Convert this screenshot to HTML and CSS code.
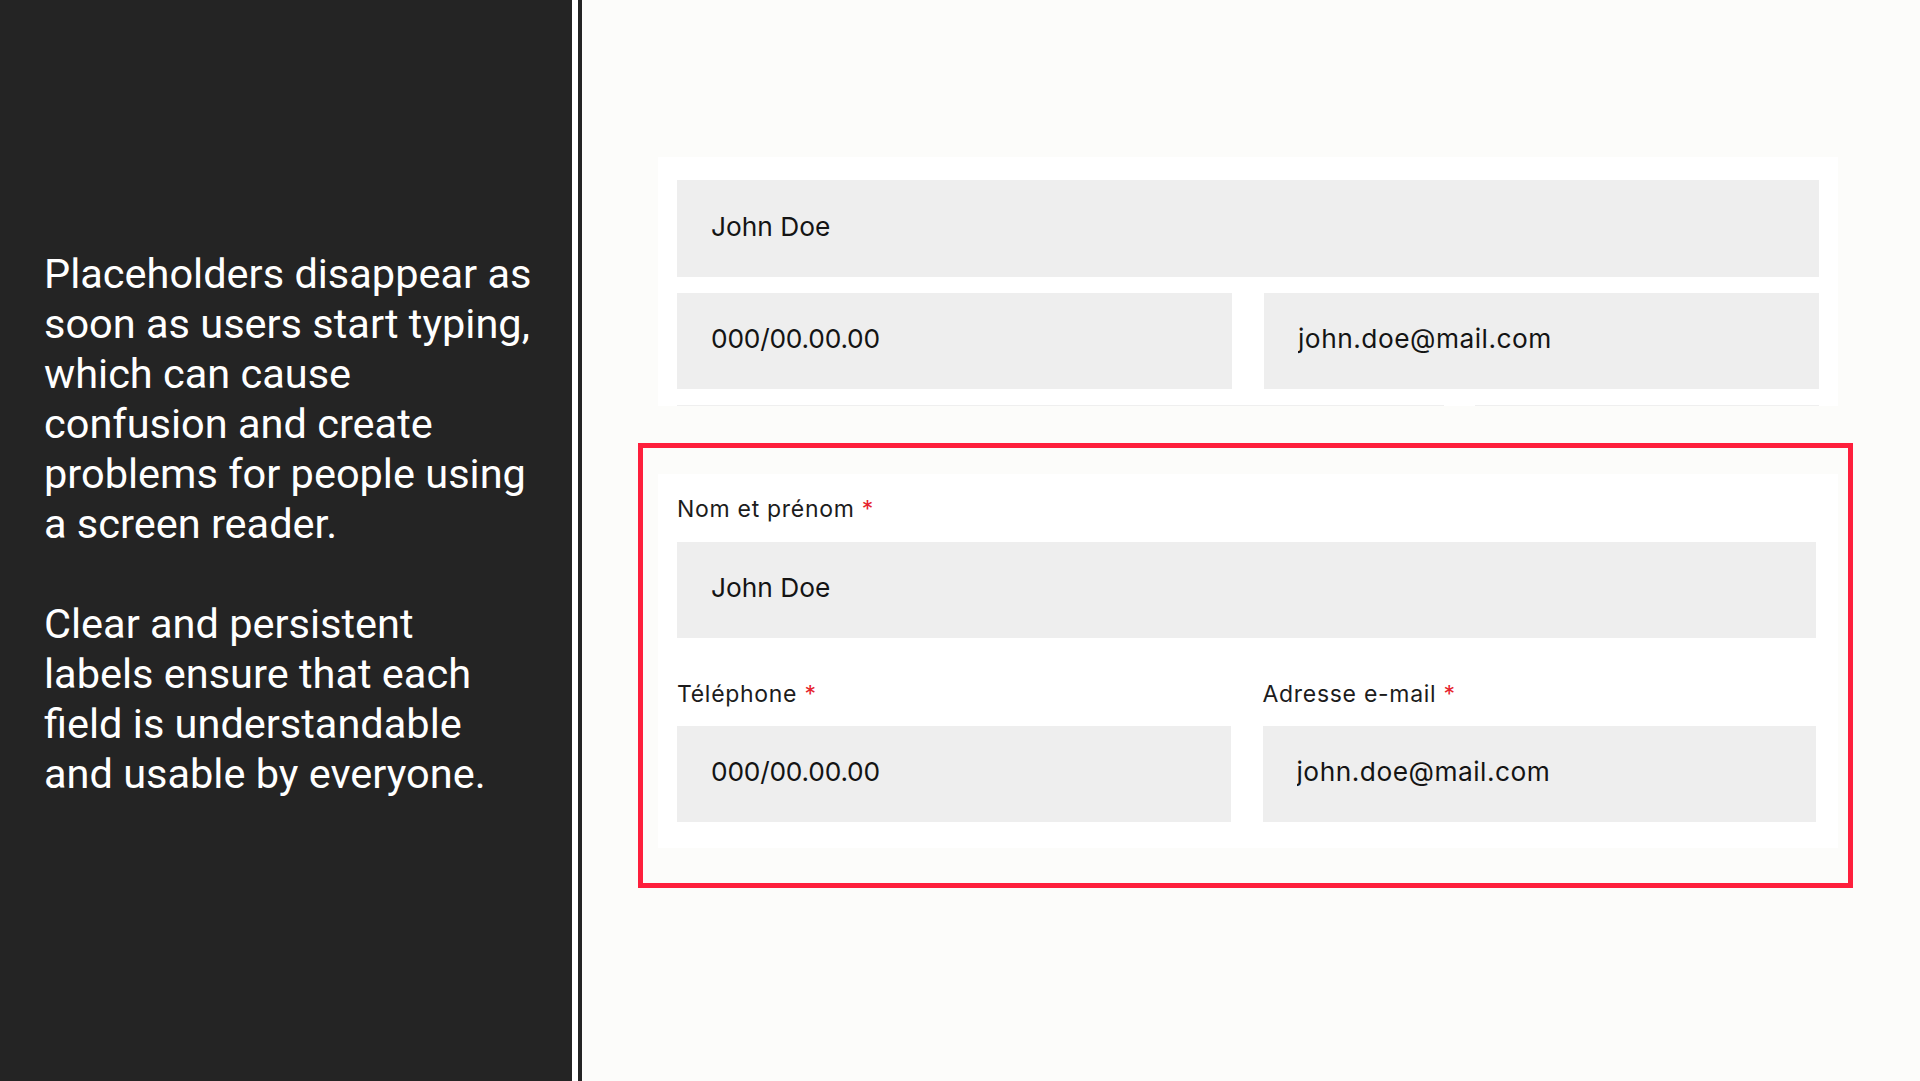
FILE: index.html
```html
<!DOCTYPE html>
<html lang="en">
<head>
<meta charset="utf-8">
<title>Labels vs placeholders</title>
<link rel="stylesheet" href="styles.css">
</head>
<body>
  <aside class="aside">
    <p class="aside-text">Placeholders disappear as<br>soon as users start typing,<br>which can cause<br>confusion and create<br>problems for people using<br>a screen reader.</p>
    <p class="aside-text">Clear and persistent<br>labels ensure that each<br>field is understandable<br>and usable by everyone.</p>
  </aside>
  <div class="divider"></div>
  <main class="main">
    <div class="stage">
      <section class="card card-plain">
        <div class="stack">
          <input class="field field-tall field-name" type="text" value="John Doe" readonly>
          <div class="row">
            <input class="field field-tel" type="text" value="000/00.00.00" readonly>
            <input class="field" type="text" value="john.doe@mail.com" readonly>
          </div>
        </div>
        <div class="rule"><span class="rule-a"></span><span class="rule-b"></span></div>
      </section>

      <section class="highlight">
        <div class="card card-labelled">
          <div class="group">
            <label class="label">Nom et prénom <span class="req">*</span></label>
            <input class="field field-name" type="text" value="John Doe" readonly>
          </div>
          <div class="row row-labelled">
            <div class="group">
              <label class="label">Téléphone <span class="req">*</span></label>
              <input class="field field-tel" type="text" value="000/00.00.00" readonly>
            </div>
            <div class="group">
              <label class="label">Adresse e-mail <span class="req">*</span></label>
              <input class="field" type="text" value="john.doe@mail.com" readonly>
            </div>
          </div>
        </div>
      </section>
    </div>
  </main>
</body>
</html>
```
FILE: styles.css
```css
* { box-sizing: border-box; }

html, body {
  margin: 0;
  height: 1081px;
}

body {
  display: flex;
  background: #fcfcfa;
  font-family: Inter, "Noto Sans", sans-serif;
  overflow: hidden;
}

.aside {
  width: 572px;
  flex: none;
  background: #242424;
  color: #ffffff;
  padding: 249px 0 0 44px;
  font-family: Roboto, "Noto Sans", sans-serif;
  font-size: 41.5px;
  line-height: 50px;
}

.aside-text {
  margin: 0 0 50px;
  white-space: nowrap;
}

.divider {
  width: 10px;
  flex: none;
  background: #ffffff;
  border-right: 4px solid #242424;
}

.main {
  flex: 1;
  padding: 157px 0 0 56px;
}

.stage {
  width: 1215px;
  display: flex;
  flex-direction: column;
}

.card {
  background: #ffffff;
}

.card-plain {
  margin: 0 15px 0 20px;
  padding: 23px 19px 0;
}

.stack {
  display: flex;
  flex-direction: column;
  gap: 16px;
}

.row {
  display: grid;
  grid-template-columns: 1fr 1fr;
  column-gap: 32px;
}

.field {
  display: block;
  width: 100%;
  height: 96px;
  margin: 0;
  border: none;
  outline: none;
  background: #eeeeee;
  padding: 0 20px 5px 34px;
  font-family: Inter, "Noto Sans", sans-serif;
  font-size: 26.3px;
  color: #141414;
  letter-spacing: 0.5px;
}

.field-tall {
  height: 97px;
}

.field-name {
  letter-spacing: 0;
}

.field-tel {
  letter-spacing: -0.2px;
}

.rule {
  display: flex;
  margin-top: 16px;
  height: 1px;
}

.rule-a {
  width: 767px;
  background: #efefef;
}

.rule-b {
  flex: 1;
  margin-left: 31px;
  background: #efefef;
}

.highlight {
  margin-top: 37px;
  border: 5px solid #fe1f3c;
  padding: 26px 10px 35px 15px;
}

.card-labelled {
  padding: 20px 22px 26px 19px;
}

.group {
  display: flex;
  flex-direction: column;
}

.label {
  display: block;
  height: 30px;
  margin-bottom: 18px;
  font-size: 23px;
  line-height: 30px;
  color: #1c1c1c;
  letter-spacing: 0.7px;
}

.req {
  color: #e6232e;
}

.row-labelled {
  margin-top: 41px;
}

.row-labelled .label {
  margin-bottom: 17px;
}
```
